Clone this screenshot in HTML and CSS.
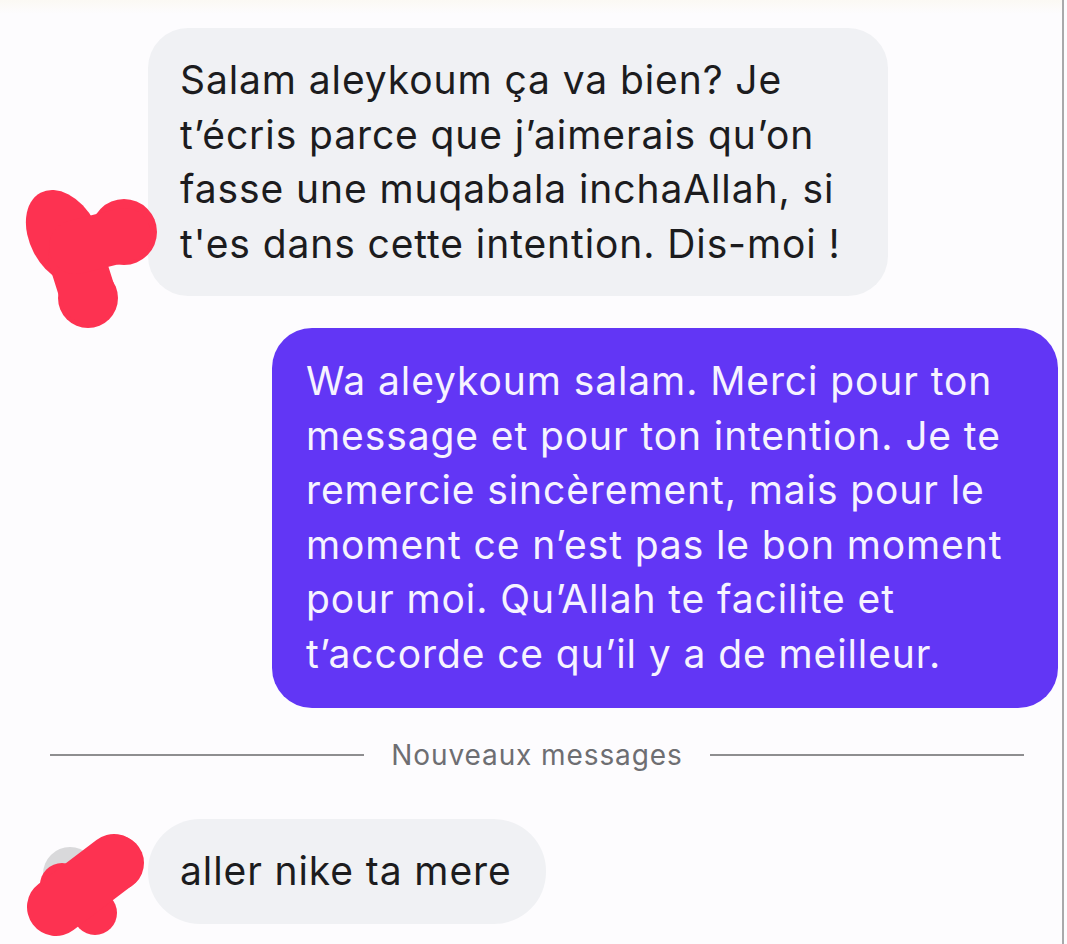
FILE: index.html
```html
<!DOCTYPE html>
<html lang="fr">
<head>
  <meta charset="UTF-8">
  <meta name="viewport" content="width=device-width, initial-scale=1.0">
  <title>Messages</title>
  <link rel="stylesheet" href="styles.css">
</head>
<body>
  <div class="screen">
    <div class="thread">
      <div class="row incoming">
        <svg class="scribble scribble-top" width="160" height="160" viewBox="0 0 160 160" aria-hidden="true">
          <g fill="#FD3251">
            <ellipse cx="44" cy="54" rx="34" ry="50" transform="rotate(-28 44 54)"/>
            <circle cx="104" cy="49" r="33"/>
            <circle cx="68" cy="115" r="30"/>
          </g>
          <g stroke="#FD3251" stroke-linecap="round" fill="none">
            <line x1="56" y1="74" x2="68" y2="112" stroke-width="56"/>
            <line x1="56" y1="64" x2="104" y2="52" stroke-width="54"/>
          </g>
        </svg>
        <div class="bubble bubble-gray bubble-wide">
          Salam aleykoum ça va bien? Je<br>
          t’écris parce que j’aimerais qu’on<br>
          fasse une muqabala inchaAllah, si<br>
          t'es dans cette intention. Dis-moi !
        </div>
      </div>

      <div class="row outgoing">
        <div class="bubble bubble-purple">
          Wa aleykoum salam. Merci pour ton<br>
          message et pour ton intention. Je te<br>
          remercie sincèrement, mais pour le<br>
          moment ce n’est pas le bon moment<br>
          pour moi. Qu’Allah te facilite et<br>
          t’accorde ce qu’il y a de meilleur.
        </div>
      </div>

      <div class="divider">
        <span class="divider-line"></span>
        <span class="divider-label">Nouveaux messages</span>
        <span class="divider-line"></span>
      </div>

      <div class="row incoming last">
        <svg class="scribble scribble-bottom" width="130" height="120" viewBox="0 0 130 120" aria-hidden="true">
          <circle cx="50" cy="45" r="27" fill="#D9D9DB"/>
          <g fill="#FD3251">
            <circle cx="42" cy="56" r="22"/>
            <circle cx="75" cy="84" r="22"/>
            <circle cx="96" cy="34" r="28"/>
          </g>
          <line x1="36" y1="78" x2="94" y2="34" stroke="#FD3251" stroke-width="58" stroke-linecap="round"/>
        </svg>
        <div class="bubble bubble-gray bubble-pill">aller nike ta mere</div>
      </div>
    </div>
  </div>
</body>
</html>
```

FILE: styles.css
```css
body {
  margin: 0;
  background-color: #FDFCFE;
  font-family: 'Inter', 'Liberation Sans', sans-serif;
  color: #1C1C1E;
}
.screen {
  width: 1064px;
  min-height: 944px;
  border-right: 2px solid #A9A9AB;
  box-sizing: border-box;
  background: linear-gradient(#FBF9F4, #FDFCFE 14px);
}
.thread {
  display: flex;
  flex-direction: column;
  padding: 28px 4px 0 0;
}
.row {
  position: relative;
  display: flex;
}
.row.incoming {
  padding-left: 148px;
}
.row.outgoing {
  justify-content: flex-end;
  margin-top: 32px;
}
.scribble {
  position: absolute;
  left: 20px;
}
.scribble-top {
  top: 155px;
}
.scribble-bottom {
  top: 10px;
}
.bubble {
  font-size: 39px;
  line-height: 54.5px;
  letter-spacing: 0.9px;
}
.bubble-gray {
  background-color: #F0F1F4;
  color: #1C1C1E;
}
.bubble-wide {
  width: 740px;
  box-sizing: border-box;
  padding: 25px 32px 25px 32px;
  border-radius: 40px;
}
.bubble-purple {
  width: 786px;
  box-sizing: border-box;
  padding: 26px 30px 27px 34px;
  border-radius: 40px;
  background-color: #6236F5;
  color: #F6F3FF;
}
.bubble-pill {
  padding: 25px 34px 25px 32px;
  border-radius: 52px;
}
.divider {
  display: flex;
  align-items: center;
  gap: 27px;
  margin: 31px 34px 0 50px;
}
.divider-line {
  flex: 1;
  height: 2px;
  background-color: #8E8E90;
}
.divider-label {
  font-size: 28px;
  line-height: 32px;
  letter-spacing: 0.9px;
  color: #6E6E72;
}
.row.last {
  margin-top: 48px;
}
```
